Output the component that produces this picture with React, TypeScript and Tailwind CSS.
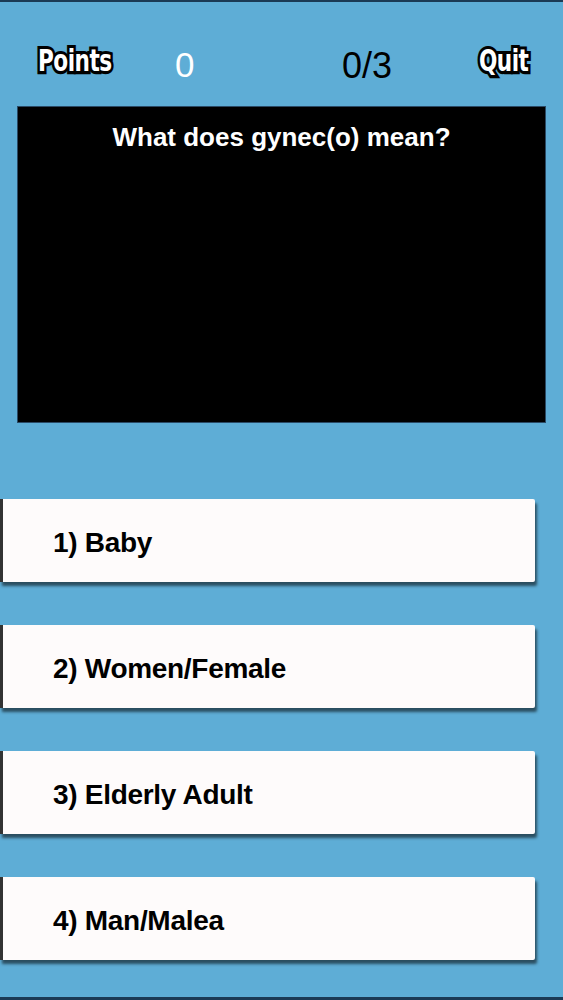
const answers = ["1) Baby", "2) Women/Female", "3) Elderly Adult", "4) Man/Malea"];

function Outlined({ children }: { children: string }) {
  return (
    <span className="inline-block origin-top text-white font-bold tracking-[-0.5px] [font-family:'DejaVu_Sans_Condensed','Liberation_Sans_Narrow',sans-serif] text-[24px] leading-none [-webkit-text-stroke:5px_#000] [paint-order:stroke_fill] [text-shadow:0_1px_1px_rgba(0,0,0,0.6)] scale-y-[1.25]">
      {children}
    </span>
  );
}

export default function App() {
  return (
    <div className="w-[563px] h-[1000px] bg-[#5eadd6] border-t-2 border-b-[3px] border-[#1b3a55] overflow-hidden flex flex-col [font-family:'Liberation_Sans',Arial,sans-serif]">
      <div className="h-[104px] relative shrink-0">
        <div className="absolute left-[38px] top-[44px]">
          <Outlined>Points</Outlined>
        </div>
        <div className="absolute left-[175px] top-[45px] text-[35px] leading-none text-white">0</div>
        <div className="absolute left-[342px] top-[46px] text-[36px] leading-none text-black">0/3</div>
        <div className="absolute left-[479px] top-[44px]">
          <Outlined>Quit</Outlined>
        </div>
      </div>

      <div className="mx-[17px] h-[317px] shrink-0 bg-black border border-[#2a4a66] flex justify-center">
        <div className="mt-[17px] text-white text-[26px] font-bold leading-none">
          What does gynec(o) mean?
        </div>
      </div>

      <div className="mt-[76px] flex flex-col gap-[43px]">
        {answers.map((a) => (
          <div
            key={a}
            className="w-[535px] h-[83px] shrink-0 bg-[#fefbfb] border-l-[3px] border-[#333] shadow-[2px_4px_3px_rgba(0,0,0,0.55)] rounded-r-[2px] flex items-center pl-[50px]"
          >
            <span className="text-[28px] text-black font-bold tracking-[-0.3px] leading-none pt-[4px]">{a}</span>
          </div>
        ))}
      </div>
    </div>
  );
}
